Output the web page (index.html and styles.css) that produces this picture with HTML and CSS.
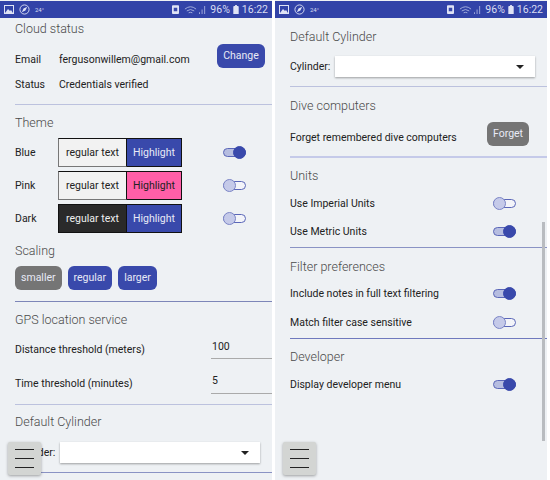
FILE: index.html
```html
<!DOCTYPE html>
<html lang="en">
<head>
    <meta charset="UTF-8">
    <meta name="viewport" content="width=device-width, initial-scale=1.0">
    <title>Subsurface settings</title>
    <link rel="stylesheet" href="styles.css">
</head>
<body>
    <div class="screens">
        <!-- left phone -->
        <div class="phone">
            <div class="statusbar">
                <svg class="st-pic" viewBox="0 0 10 9"><rect x="0.5" y="0.5" width="9" height="8" fill="none" stroke="#dfe3f5"/><path d="M1 8l3-4 2 2 1-1 2 3z" fill="#dfe3f5"/></svg>
                <svg class="st-nav" viewBox="0 0 12 12"><circle cx="6" cy="6" r="5" fill="none" stroke="#dfe3f5"/><path d="M9 3L5 5 3 9l4-2z" fill="#dfe3f5"/></svg>
                <span class="st-temp">24°</span>
                <span class="st-right">
                    <svg class="st-bat" viewBox="0 0 8 10"><rect width="8" height="10" rx="1" fill="#dfe3f5"/><rect x="2" y="3" width="4" height="4" fill="#3949ab"/></svg>
                    <svg class="st-wifi" viewBox="0 0 14 10"><path d="M1 4q6-5 12 0M3 6q4-3 8 0M5 8q2-1 4 0" fill="none" stroke="#a9b2df"/></svg>
                    <svg class="st-sig" viewBox="0 0 8 10"><path d="M0 10h1V8H0zM3 10h1V5H3zM6 10h1V1H6z" fill="#a9b2df"/></svg>
                    <span>96%</span>
                    <svg class="st-cell" viewBox="0 0 6 10"><path d="M1 1h1V0h2v1h1q1 0 1 1v8H0V2q0-1 1-1z" fill="#dfe3f5"/></svg>
                    <span>16:22</span>
                </span>
            </div>
            <div class="content">
                <h2 class="title first">Cloud status</h2>
                <div class="row cloud-row">
                    <span class="cloud-label">Email</span>
                    <span class="grow">fergusonwillem@gmail.com</span>
                    <button class="btn change">Change</button>
                </div>
                <div class="row status-row">
                    <span class="cloud-label">Status</span>
                    <span>Credentials verified</span>
                </div>
                <hr class="line line-light">

                <h2 class="title theme-title">Theme</h2>
                <div class="theme-rows">
                    <div class="theme-row">
                        <span class="cloud-label">Blue</span>
                        <div class="sample">
                            <span class="sample-text">regular text</span>
                            <span class="sample-hl">Highlight</span>
                        </div>
                        <span class="switch on"></span>
                    </div>
                    <div class="theme-row">
                        <span class="cloud-label">Pink</span>
                        <div class="sample">
                            <span class="sample-text">regular text</span>
                            <span class="sample-hl pink">Highlight</span>
                        </div>
                        <span class="switch"></span>
                    </div>
                    <div class="theme-row">
                        <span class="cloud-label">Dark</span>
                        <div class="sample dark-sample">
                            <span class="sample-text dark">regular text</span>
                            <span class="sample-hl">Highlight</span>
                        </div>
                        <span class="switch"></span>
                    </div>
                </div>

                <h2 class="title scaling-title">Scaling</h2>
                <div class="scale-row">
                    <button class="btn grey">smaller</button>
                    <button class="btn">regular</button>
                    <button class="btn">larger</button>
                </div>
                <hr class="line scale-line">

                <h2 class="title gps-title">GPS location service</h2>
                <div class="row gps-row">
                    <span class="grow">Distance threshold (meters)</span>
                    <span class="field">100</span>
                </div>
                <div class="row gps-row time-row">
                    <span class="grow">Time threshold (minutes)</span>
                    <span class="field">5</span>
                </div>
                <hr class="line line-light time-line">

                <h2 class="title cyl-title">Default Cylinder</h2>
                <div class="row cyl-row">
                    <span class="cyl-label">Cylinder:</span>
                    <div class="combo"><span class="arrow"></span></div>
                </div>
                <hr class="line cyl-line">
            </div>
            <div class="menu-btn"><span></span><span></span><span></span></div>
        </div>

        <!-- right phone -->
        <div class="phone">
            <div class="statusbar">
                <svg class="st-pic" viewBox="0 0 10 9"><rect x="0.5" y="0.5" width="9" height="8" fill="none" stroke="#dfe3f5"/><path d="M1 8l3-4 2 2 1-1 2 3z" fill="#dfe3f5"/></svg>
                <svg class="st-nav" viewBox="0 0 12 12"><circle cx="6" cy="6" r="5" fill="none" stroke="#dfe3f5"/><path d="M9 3L5 5 3 9l4-2z" fill="#dfe3f5"/></svg>
                <span class="st-temp">24°</span>
                <span class="st-right">
                    <svg class="st-bat" viewBox="0 0 8 10"><rect width="8" height="10" rx="1" fill="#dfe3f5"/><rect x="2" y="3" width="4" height="4" fill="#3949ab"/></svg>
                    <svg class="st-wifi" viewBox="0 0 14 10"><path d="M1 4q6-5 12 0M3 6q4-3 8 0M5 8q2-1 4 0" fill="none" stroke="#a9b2df"/></svg>
                    <svg class="st-sig" viewBox="0 0 8 10"><path d="M0 10h1V8H0zM3 10h1V5H3zM6 10h1V1H6z" fill="#a9b2df"/></svg>
                    <span>96%</span>
                    <svg class="st-cell" viewBox="0 0 6 10"><path d="M1 1h1V0h2v1h1q1 0 1 1v8H0V2q0-1 1-1z" fill="#dfe3f5"/></svg>
                    <span>16:22</span>
                </span>
            </div>
            <div class="content">
                <h2 class="title r-first">Default Cylinder</h2>
                <div class="row cyl-row r-cyl">
                    <span class="cyl-label">Cylinder:</span>
                    <div class="combo"><span class="arrow"></span></div>
                </div>
                <hr class="line line-light cyl-line">

                <h2 class="title r-dive">Dive computers</h2>
                <div class="row forget-row">
                    <span class="grow">Forget remembered dive computers</span>
                    <button class="btn grey forget">Forget</button>
                </div>
                <hr class="line thick">

                <h2 class="title r-title">Units</h2>
                <div class="row pref-row">
                    <span class="grow">Use Imperial Units</span>
                    <span class="switch"></span>
                </div>
                <div class="row pref-row">
                    <span class="grow">Use Metric Units</span>
                    <span class="switch on"></span>
                </div>
                <hr class="line pref-line">

                <h2 class="title filter-title">Filter preferences</h2>
                <div class="row pref-row after-filter">
                    <span class="grow">Include notes in full text filtering</span>
                    <span class="switch on"></span>
                </div>
                <div class="row pref-row">
                    <span class="grow">Match filter case sensitive</span>
                    <span class="switch"></span>
                </div>
                <hr class="line pref-line dark-line">

                <h2 class="title r-title">Developer</h2>
                <div class="row pref-row">
                    <span class="grow">Display developer menu</span>
                    <span class="switch on"></span>
                </div>
            </div>
            <div class="scrollbar"></div>
            <div class="menu-btn"><span></span><span></span><span></span></div>
        </div>
    </div>
</body>
</html>
```

FILE: styles.css
```css
body {
    margin: 0;
    background: #fff;
    font-family: Roboto, "Liberation Sans", sans-serif;
    font-size: 10.5px;
    line-height: 12px;
    color: #222;
}

.screens {
    display: flex;
    gap: 3px;
    height: 480px;
    overflow: hidden;
}

.phone {
    position: relative;
    width: 272px;
    height: 480px;
    background: #eef1f4;
    overflow: hidden;
}

.statusbar {
    display: flex;
    align-items: center;
    gap: 4px;
    height: 17px;
    margin-top: 1px;
    padding: 0 4px;
    background: #3243a8;
    color: #d9ddf2;
    font-size: 10.5px;
}

.st-pic { width: 10px; height: 9px; }
.st-nav { width: 11px; height: 11px; margin-left: 1px; }
.st-temp { font-size: 6px; margin-left: 1px; }
.st-right { display: flex; align-items: center; gap: 2px; margin-left: auto; }
.st-bat { width: 7px; height: 9px; margin-right: 3px; }
.st-wifi { width: 13px; height: 10px; }
.st-sig { width: 7px; height: 9px; margin-right: 2px; }
.st-cell { width: 6px; height: 9px; margin: 0 1px; }

.content {
    padding-left: 15px;
}

.title {
    margin: 0;
    font-size: 12.5px;
    font-weight: 300;
    line-height: 16px;
    color: #4a4a4a;
}

.first { margin-top: 3px; }

.row {
    display: flex;
    align-items: center;
}

.grow { flex: 1; }

.cloud-label {
    width: 44px;
    flex: none;
}

.theme-row .cloud-label { width: 43px; }

.cloud-row {
    align-items: flex-start;
    margin-top: 7px;
    padding-right: 7px;
}

.cloud-row span { margin-top: 10px; }

.status-row { height: 14px; margin-top: 10px; }

.btn {
    height: 24px;
    padding: 0 6px 2px;
    border: 0;
    border-radius: 6px;
    background: #3949ab;
    color: #e8eaf6;
    font-family: inherit;
    font-size: 10.5px;
}

.btn.grey { background: #757575; }
.change { width: 48px; }

.line {
    height: 0;
    margin: 0;
    border: 0;
    border-top: 1px solid #8a93c4;
}

.line-light { border-top-color: #bcc2de; }

.status-row + .line { margin-top: 12px; }
.theme-title { margin-top: 10px; }

.theme-rows {
    display: flex;
    flex-direction: column;
    gap: 4px;
    margin-top: 7px;
}

.theme-row {
    display: flex;
    align-items: center;
    height: 29px;
}

.sample {
    display: flex;
    width: 124px;
    height: 29px;
    box-sizing: border-box;
    border-top: 1px solid #111;
    border-right: 1px solid #111;
    border-left: 1px solid #777;
    text-align: center;
    line-height: 27px;
}

.dark-sample { border-left-color: #111; }

.sample-text {
    width: 67px;
    background: #f2f2f2;
    border-right: 1px solid #111;
    border-bottom: 1px solid #777;
}

.sample-text.dark { background: #2a2a2a; color: #eee; border-bottom-color: #111; }

.sample-hl {
    flex: 1;
    background: #3949ab;
    color: #e8eaf6;
    border-bottom: 1px solid #111;
}

.sample-hl.pink { background: #ff5fa8; color: #222; }

.theme-row .switch { margin-left: 41px; }

.switch {
    position: relative;
    display: block;
    flex: none;
    box-sizing: border-box;
    width: 23px;
    height: 9px;
    border: 1px solid #5b67b8;
    border-radius: 5px;
    background: #f3f4f9;
}

.switch::after {
    content: "";
    position: absolute;
    left: -1px;
    top: -3px;
    box-sizing: border-box;
    width: 13px;
    height: 13px;
    border: 1px solid #7b85c6;
    border-radius: 50%;
    background: #c5cae9;
}

.switch.on { background: #b6bde0; }

.switch.on::after {
    left: auto;
    right: -1px;
    border-color: #3949ab;
    background: #3949ab;
}

.scaling-title { margin-top: 10px; }

.scale-row {
    display: flex;
    gap: 6px;
    margin-top: 7px;
}

.scale-line { margin-top: 11px; border-top-color: #7d86b8; }
.gps-title { margin-top: 10px; }

.gps-row { align-items: flex-start; margin-top: 10px; }
.gps-row .grow { margin-top: 6px; }
.time-row { margin-top: 14px; }
.time-row .grow { margin-top: 5px; }

.field {
    width: 61px;
    height: 21px;
    box-sizing: border-box;
    padding: 3px 0 0 1px;
    border-bottom: 1px solid #aaa;
}

.time-row .field { padding-top: 2px; }

.time-line { margin-top: 10px; }
.cyl-title { margin-top: 9px; }

.cyl-row { height: 21px; margin-top: 12px; padding-right: 12px; }
.cyl-label { width: 45px; flex: none; }

.combo {
    position: relative;
    flex: 1;
    height: 21px;
    background: #fff;
    box-shadow: 0 1px 2px rgba(0, 0, 0, 0.35);
}

.arrow {
    position: absolute;
    right: 11px;
    top: 9px;
    border-left: 4px solid transparent;
    border-right: 4px solid transparent;
    border-top: 4px solid #222;
}

.cyl-line { margin-top: 9px; }

.r-first { margin-top: 11px; }
.r-cyl { margin-top: 11px; }
.r-title { margin-top: 10px; }
.r-dive { margin-top: 11px; }

.forget-row { margin-top: 8px; padding-right: 18px; }
.forget-row .grow { margin-top: 8px; }
.forget { width: 42px; }

.thick { border-top: 2px solid #c5cae9; margin-top: 10px; }

.pref-row { height: 14px; margin-top: 14px; }
.pref-row .grow { margin-top: 2px; }
.title + .pref-row { margin-top: 12px; }
.title + .after-filter { margin-top: 11px; }
.after-filter + .pref-row { margin-top: 15px; }
.pref-row .switch { margin-right: 31px; }

.pref-line { margin-top: 9px; }
.dark-line { border-top-color: #6f79bd; }
.filter-title { margin-top: 11px; }

.scrollbar {
    position: absolute;
    right: 2px;
    top: 222px;
    width: 3px;
    height: 219px;
    background: #b9bcc0;
}

.menu-btn {
    position: absolute;
    left: 8px;
    top: 442px;
    display: flex;
    flex-direction: column;
    justify-content: center;
    gap: 8px;
    width: 33px;
    height: 33px;
    padding: 0 7px;
    box-sizing: border-box;
    background: #d3d5d3;
    border-radius: 2px;
    box-shadow: 0 1px 3px rgba(0, 0, 0, 0.35);
}

.menu-btn span {
    height: 1px;
    background: #222;
}
```
